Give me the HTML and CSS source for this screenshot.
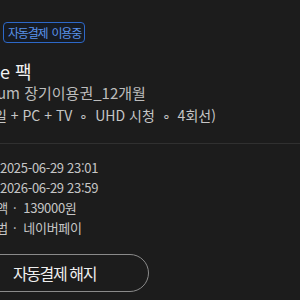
FILE: index.html
```html
<!doctype html>
<html lang="ko">
<head>
  <meta charset="utf-8">
  <title>이용권 정보</title>
  <link rel="stylesheet" href="styles.css">
</head>

<body>
  <div class="page">
    <span class="badge">자동결제 이용중</span>

    <!-- 상품 정보 -->
    <h2 class="title"><span class="clip">wavv</span>e 팩</h2>
    <p class="sub name"><span class="clip">Premi</span>um 장기이용권_12개월</p>
    <p class="sub desc"><span class="clip">(모바</span>일 + PC + TV <span class="dot">∘</span> UHD 시청 <span class="dot">∘</span> 4회선)</p>

    <hr class="divider">

    <!-- 결제 정보 -->
    <ul class="info">
      <li><span class="clip">결제일시</span>2025-06-29 23:01</li>
      <li><span class="clip">다음 결제일</span>2026-06-29 23:59</li>
      <li class="pay"><span class="clip">결제 금액</span><span class="sep">·</span>139000원</li>
      <li class="pay"><span class="clip">결제 방법</span><span class="sep">·</span>네이버페이</li>
    </ul>

    <button class="cancel" type="button">자동결제 해지</button>
  </div>
</body>
</html>
```

FILE: styles.css
```css
* {
  box-sizing: border-box;
}

body {
  margin: 0;
  background: #1c1c1c;
  font-family: 'Noto Sans CJK KR', 'Noto Sans', sans-serif;
  color: #c6c6c6;
  overflow: hidden;
}

.page {
  padding-top: 19px;
}

.badge {
  display: inline-block;
  margin-left: 3px;
  padding: 0 3px 0 4px;
  height: 21px;
  line-height: 19px;
  border: 1px solid #2d68c8;
  border-radius: 4px;
  background: #161b23;
  color: #5a92ea;
  font-size: 12px;
  letter-spacing: -1.2px;
  word-spacing: 2px;
}

/* 왼쪽으로 잘린 글자 */
.clip {
  display: inline-block;
  width: 140px;
  margin-left: -140px;
  text-align: right;
  white-space: nowrap;
}

.title {
  margin: 17px 0 0;
  font-size: 18px;
  line-height: 22px;
  font-weight: normal;
  color: #f2f2f2;
}

.sub {
  margin: 0;
  white-space: nowrap;
}

.name {
  margin-left: -3px;
  font-size: 15px;
  line-height: 22px;
  color: #bdbdbd;
}

.desc {
  margin-left: -6px;
  font-size: 14px;
  line-height: 23px;
}

.dot {
  margin: 0 3px;
}

.divider {
  margin: 16px 0 0;
  border: none;
  border-top: 1px solid #303030;
}

.info {
  list-style: none;
  margin: 14px 0 0;
  padding: 0;
  font-size: 13px;
  line-height: 20px;
  letter-spacing: -0.3px;
}

.info .pay {
  padding-left: 8px;
}

.sep {
  margin: 0 7px 0 5px;
}

.cancel {
  display: block;
  margin: 16px 0 0 -40px;
  width: 189px;
  height: 38px;
  border: 1.5px solid #8a8a8a;
  border-radius: 19px;
  background: none;
  color: #eeeeee;
  font-family: inherit;
  font-size: 16px;
  letter-spacing: -1.4px;
  cursor: pointer;
}
```
